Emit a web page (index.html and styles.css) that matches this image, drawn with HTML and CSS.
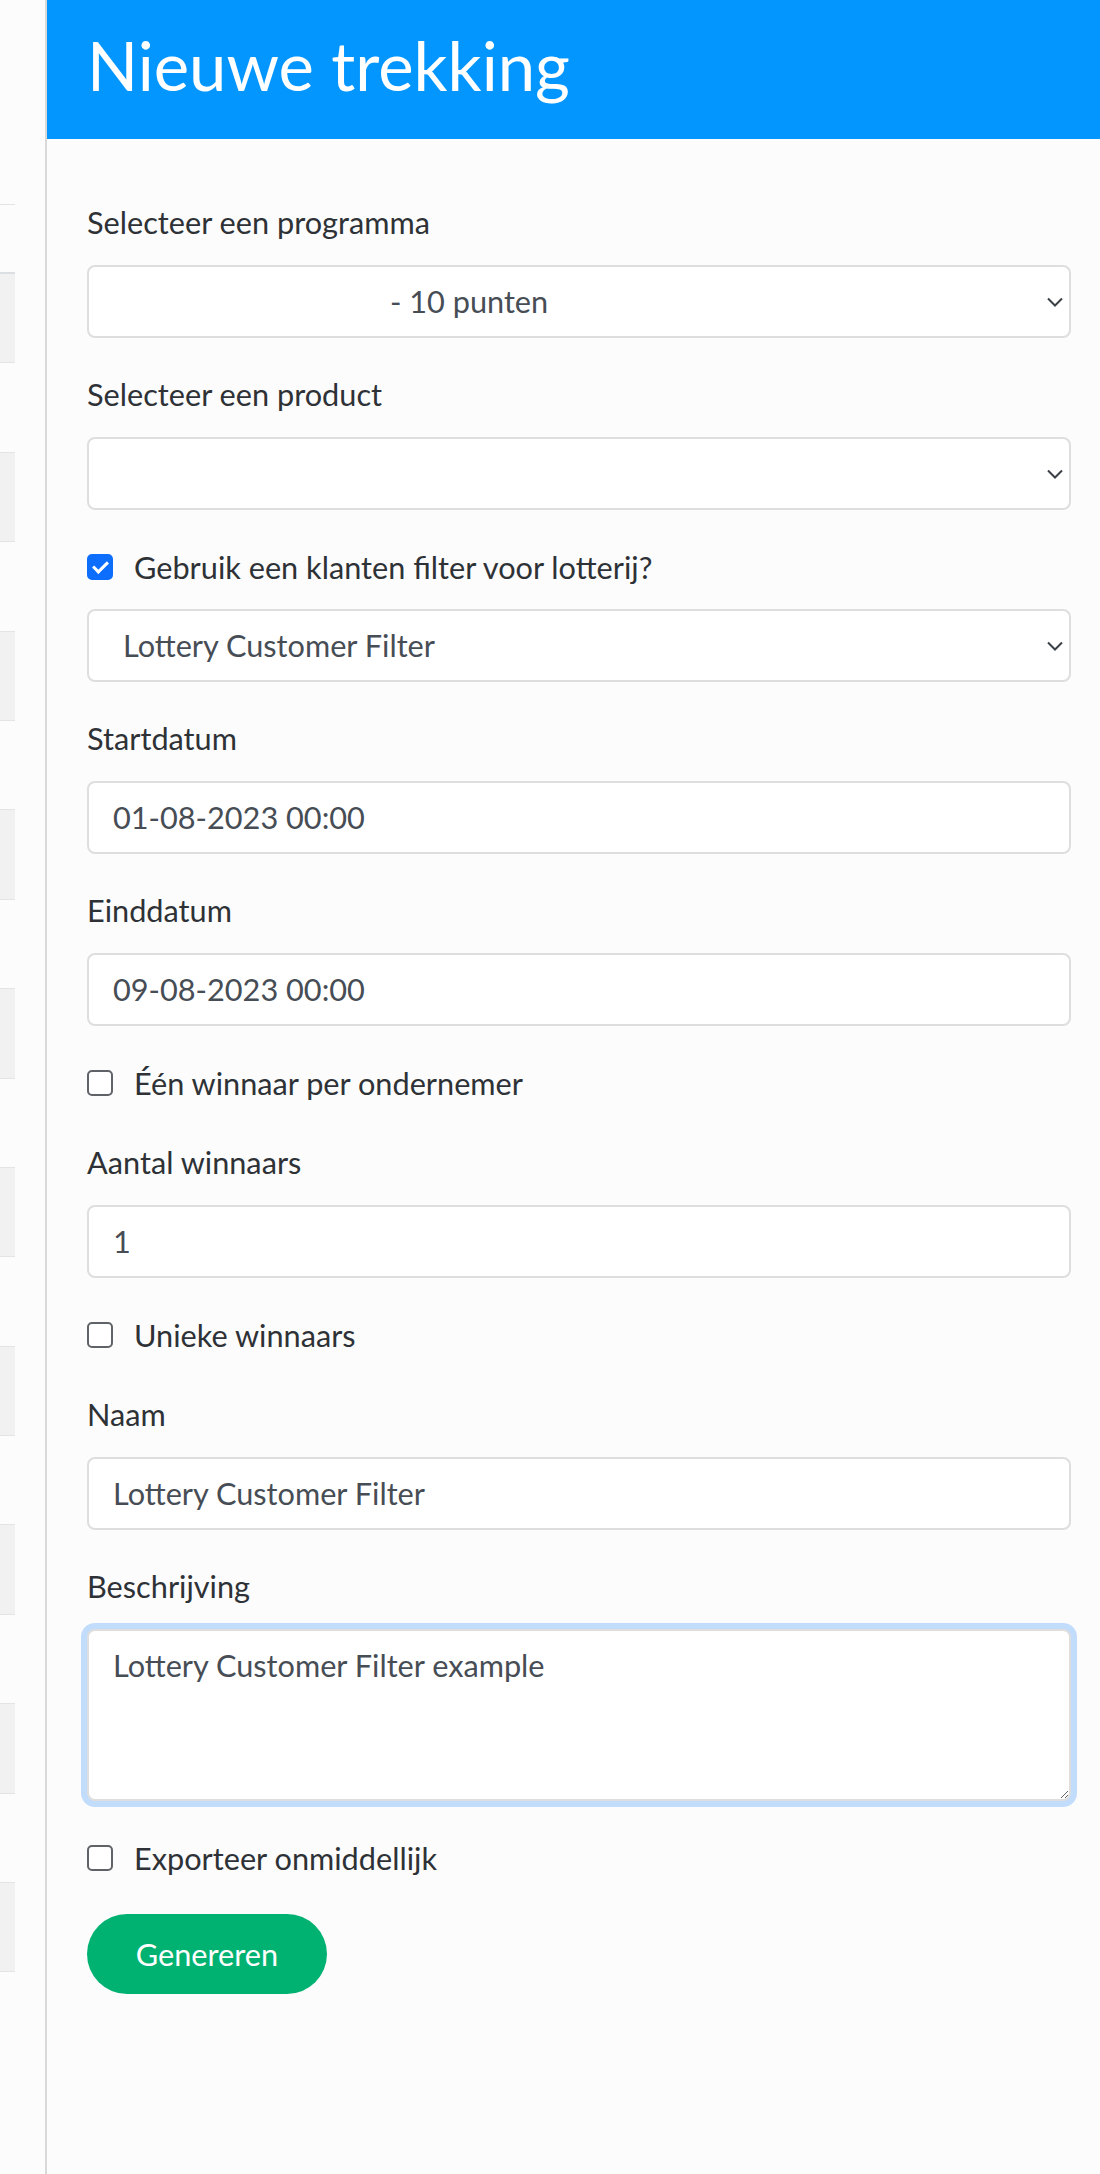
FILE: index.html
```html
<!DOCTYPE html>
<html lang="nl">
<head>
  <meta charset="UTF-8" />
  <meta name="viewport" content="width=device-width, initial-scale=1.0"/>
  <title>Nieuwe trekking</title>
  <link rel="stylesheet" href="styles.css">
</head>
<body>
  <div class="page">
    <div class="behind">
      <div class="behind-table">
        <div class="behind-head"></div>
        <div class="behind-row odd"></div>
        <div class="behind-row"></div>
        <div class="behind-row odd"></div>
        <div class="behind-row"></div>
        <div class="behind-row odd"></div>
        <div class="behind-row"></div>
        <div class="behind-row odd"></div>
        <div class="behind-row"></div>
        <div class="behind-row odd"></div>
        <div class="behind-row"></div>
        <div class="behind-row odd"></div>
        <div class="behind-row"></div>
        <div class="behind-row odd"></div>
        <div class="behind-row"></div>
        <div class="behind-row odd"></div>
        <div class="behind-row"></div>
        <div class="behind-row odd"></div>
        <div class="behind-row"></div>
        <div class="behind-row odd"></div>
      </div>
    </div>

    <aside class="drawer">
      <header class="drawer-head">
        <h1>Nieuwe trekking</h1>
      </header>

      <form class="drawer-body" id="lotteryForm">
        <div class="field">
          <label class="field-label" for="program">Selecteer een programma</label>
          <div class="select-wrap">
            <select id="program" name="program" class="control control-masked">
              <option>- 10 punten</option>
            </select>
            <svg class="chevron" width="16" height="10" viewBox="0 0 16 10"><path d="M1 1.5l7 7 7-7" fill="none" stroke="#3b4046" stroke-width="2"/></svg>
          </div>
        </div>

        <div class="field">
          <label class="field-label" for="product">Selecteer een product</label>
          <div class="select-wrap">
            <select id="product" name="product" class="control">
              <option></option>
            </select>
            <svg class="chevron" width="16" height="10" viewBox="0 0 16 10"><path d="M1 1.5l7 7 7-7" fill="none" stroke="#3b4046" stroke-width="2"/></svg>
          </div>
        </div>

        <label class="check check-tight">
          <input type="checkbox" name="useFilter" checked />
          <span>Gebruik een klanten filter voor lotterij?</span>
        </label>

        <div class="field">
          <div class="select-wrap">
            <select id="filter" name="filter" class="control control-indent">
              <option>Lottery Customer Filter</option>
            </select>
            <svg class="chevron" width="16" height="10" viewBox="0 0 16 10"><path d="M1 1.5l7 7 7-7" fill="none" stroke="#3b4046" stroke-width="2"/></svg>
          </div>
        </div>

        <div class="field">
          <label class="field-label" for="startDate">Startdatum</label>
          <input type="text" id="startDate" name="startDate" class="control" value="01-08-2023 00:00" />
        </div>

        <div class="field">
          <label class="field-label" for="endDate">Einddatum</label>
          <input type="text" id="endDate" name="endDate" class="control" value="09-08-2023 00:00" />
        </div>

        <label class="check">
          <input type="checkbox" name="onePerCompany" />
          <span>Één winnaar per ondernemer</span>
        </label>

        <div class="field">
          <label class="field-label" for="winners">Aantal winnaars</label>
          <input type="text" id="winners" name="winners" class="control" value="1" />
        </div>

        <label class="check">
          <input type="checkbox" name="unique" />
          <span>Unieke winnaars</span>
        </label>

        <div class="field">
          <label class="field-label" for="name">Naam</label>
          <input type="text" id="name" name="name" class="control" value="Lottery Customer Filter" />
        </div>

        <div class="field">
          <label class="field-label" for="description">Beschrijving</label>
          <textarea id="description" name="description" class="control control-area is-focus" rows="3">Lottery Customer Filter example</textarea>
        </div>

        <label class="check">
          <input type="checkbox" name="exportNow" />
          <span>Exporteer onmiddellijk</span>
        </label>

        <button type="submit" class="btn-submit">Genereren</button>
      </form>
    </aside>
  </div>
</body>
</html>
```

FILE: styles.css
```css
body {
  margin: 0;
  font-family: Lato, "Noto Sans", sans-serif;
  background-color: #fcfcfc;
  color: #2e3236;
}

.page {
  display: flex;
  min-height: 100vh;
}

/* strook van de tabel achter het paneel */
.behind {
  flex: none;
  width: 45px;
  padding-top: 204px;
  box-sizing: border-box;
}

.behind-table {
  width: 15px;
  border-top: 1px solid #e4e4e4;
}

.behind-head {
  height: 67px;
  border-bottom: 2px solid #dcdfe2;
}

.behind-row {
  height: 88.4px;
  border-bottom: 1px solid #e2e4e6;
}

.behind-row.odd {
  background-color: #f1f1f1;
}

.drawer {
  flex: 1;
  display: flex;
  flex-direction: column;
  border-left: 2px solid #d9d9d9;
  background-color: #fcfcfc;
}

.drawer-head {
  height: 139px;
  box-sizing: border-box;
  padding: 26px 0 0 40px;
  background-color: #0496ff;
}

.drawer-head h1 {
  margin: 0;
  font-size: 67px;
  font-weight: 400;
  line-height: 79px;
  color: #ffffff;
}

.drawer-body {
  padding: 61px 29px 0 40px;
}

.field {
  margin-bottom: 34px;
}

.field-label {
  display: block;
  font-size: 30.7px;
  line-height: 46px;
  margin-bottom: 19px;
}

.control {
  display: block;
  width: 100%;
  height: 73px;
  box-sizing: border-box;
  padding: 0 24px;
  border: 2px solid #dedede;
  border-radius: 8px;
  background-color: #ffffff;
  font-family: inherit;
  font-size: 30.7px;
  color: #474d55;
  outline: none;
}

select.control {
  appearance: none;
  -webkit-appearance: none;
}

.control-masked {
  padding-left: 301px;
}

.control-indent {
  padding-left: 34px;
}

.control-area {
  height: 172px;
  padding: 12px 24px;
  line-height: 46px;
  resize: vertical;
}

.control.is-focus,
.control:focus {
  box-shadow: 0 0 0 6px #c2dcfc;
}

.select-wrap {
  position: relative;
}

.chevron {
  position: absolute;
  right: 8px;
  top: 50%;
  margin-top: -5px;
  pointer-events: none;
}

.check {
  display: flex;
  align-items: center;
  gap: 21px;
  height: 46px;
  margin-bottom: 34px;
  font-size: 30.7px;
}

.check-tight {
  margin-bottom: 19px;
}

.check input {
  appearance: none;
  -webkit-appearance: none;
  display: grid;
  place-content: center;
  flex: none;
  width: 26px;
  height: 26px;
  margin: 0;
  border: 2px solid #5f6368;
  border-radius: 5px;
  background-color: #ffffff;
}

.check input:checked {
  border-color: #0d6efd;
  background-color: #0d6efd;
}

.check input:checked::after {
  content: "";
  width: 6px;
  height: 12px;
  border: solid #ffffff;
  border-width: 0 3px 3px 0;
  transform: translateY(-2px) rotate(45deg);
}

.btn-submit {
  width: 240px;
  height: 80px;
  margin-top: -1px;
  border: none;
  border-radius: 40px;
  background-color: #00b272;
  color: #ffffff;
  font-family: inherit;
  font-size: 30.7px;
  cursor: pointer;
}
```
